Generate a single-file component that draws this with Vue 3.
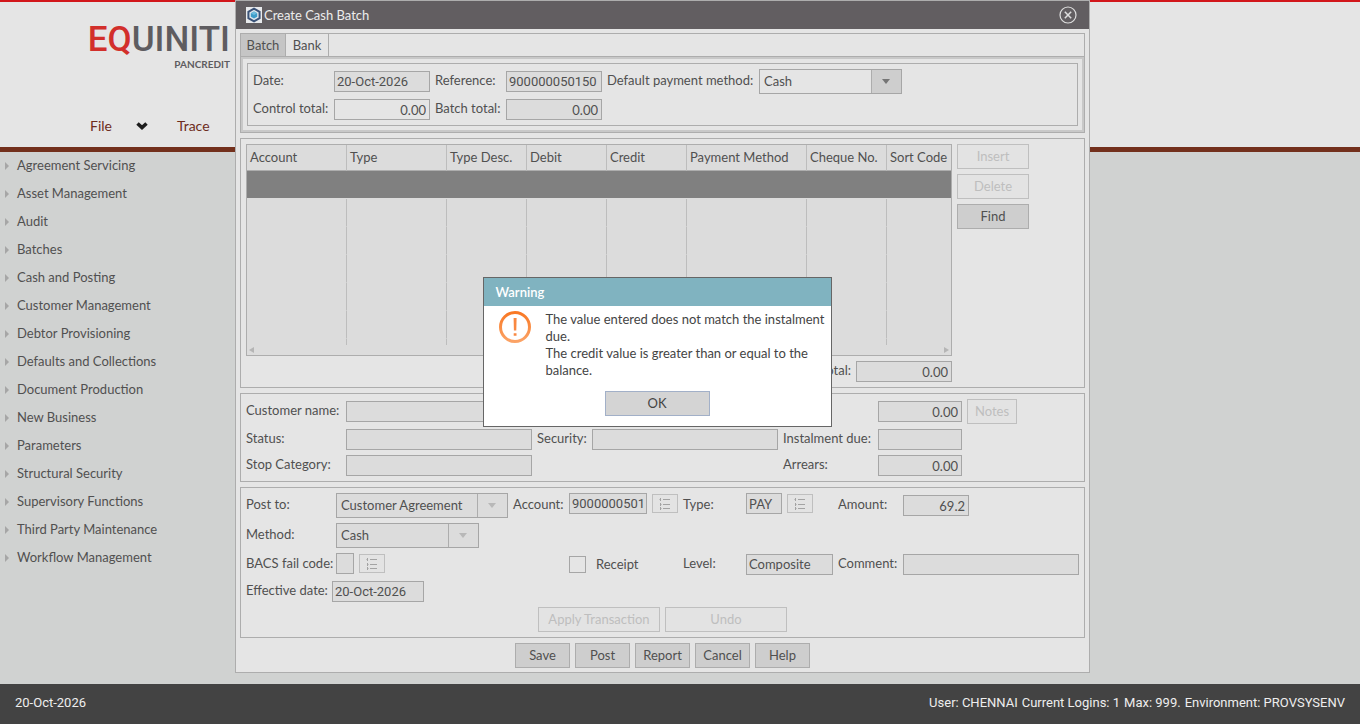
<script setup>
const menuItems = [
  'Agreement Servicing', 'Asset Management', 'Audit', 'Batches', 'Cash and Posting',
  'Customer Management', 'Debtor Provisioning', 'Defaults and Collections',
  'Document Production', 'New Business', 'Parameters', 'Structural Security',
  'Supervisory Functions', 'Third Party Maintenance', 'Workflow Management',
]
const columns = [
  { name: 'Account', size: 'w100' },
  { name: 'Type', size: 'w100' },
  { name: 'Type Desc.', size: 'w80' },
  { name: 'Debit', size: 'w80' },
  { name: 'Credit', size: 'w80' },
  { name: 'Payment Method', size: 'w120' },
  { name: 'Cheque No.', size: 'w80' },
  { name: 'Sort Code', size: 'rest' },
]
const actions = ['Save', 'Post', 'Report', 'Cancel', 'Help']
</script>

<template>
  <div class="page">
    <header class="banner">
      <div class="logo">
        <span class="brand"><span class="brand-red">EQ</span>UINITI</span>
        <span class="brand-sub">PANCREDIT</span>
      </div>
      <nav class="top-nav">
        <a href="#file">File</a>
        <svg class="chevron" viewBox="0 0 12 8" aria-hidden="true"><path d="M1.5 1.5 L6 5.5 L10.5 1.5" fill="none" stroke="#1c1c1c" stroke-width="3.6" /></svg>
        <a href="#trace">Trace</a>
      </nav>
    </header>

    <nav class="side-menu">
      <a v-for="item in menuItems" :key="item" href="#menu"><i class="caret"></i><span>{{ item }}</span></a>
    </nav>

    <footer class="status-bar">
      <span>20-Oct-2026</span>
      <span class="session"><span>User: CHENNAI</span><span>Current Logins: 1</span><span>Max: 999.</span><span>Environment: PROVSYSENV</span></span>
    </footer>

    <main class="window">
      <div class="title-bar">
        <svg class="app-icon" viewBox="0 0 16 16" aria-hidden="true">
          <rect width="16" height="16" fill="#e8eaec" />
          <path d="M8 1.6 L13.6 4.8 V11.2 L8 14.4 L2.4 11.2 V4.8 Z" fill="#dfe6ec" stroke="#3b5378" stroke-width="2" />
          <path d="M8 4.4 L11.2 6.2 V9.8 L8 11.6 L4.8 9.8 V6.2 Z" fill="#3d9cc9" />
          <path d="M8 4.4 L11.2 6.2 L8 8 L4.8 6.2 Z" fill="#6cbbdc" />
        </svg>
        <h1>Create Cash Batch</h1>
        <button class="close" type="button" aria-label="Close">
          <svg viewBox="0 0 18 18"><g fill="none" stroke="#dedede"><circle cx="9" cy="9" r="8" stroke-width="1.2" /><path d="M5.8 5.8 L12.2 12.2 M12.2 5.8 L5.8 12.2" stroke-width="1.5" /></g></svg>
        </button>
      </div>

      <div class="content">
        <section class="tab-box">
          <div class="tabs">
            <button class="tab active" type="button">Batch</button>
            <button class="tab" type="button">Bank</button>
          </div>
          <div class="tab-frame">
            <div class="batch-form">
              <label for="date">Date:</label>
              <input id="date" class="digits" value="20-Oct-2026" readonly>
              <label for="reference">Reference:</label>
              <input id="reference" class="digits" value="900000050150" readonly>
              <label for="default-method">Default payment method:</label>
              <div class="select-box short">
                <select id="default-method"><option>Cash</option></select><i></i>
              </div>
              <label for="control-total">Control total:</label>
              <input id="control-total" class="num open" value="0.00">
              <label for="batch-total">Batch total:</label>
              <input id="batch-total" class="num" value="0.00" readonly>
            </div>
          </div>
        </section>

        <section class="panel entries">
          <div class="entries-main">
            <div class="grid-box">
              <div class="grid-view">
                <table>
                  <thead>
                    <tr><th v-for="c in columns" :key="c.name" :class="c.size">{{ c.name }}</th></tr>
                  </thead>
                  <tbody>
                    <tr v-for="n in 7" :key="n" :class="{ selected: n === 1 }">
                      <td v-for="c in columns" :key="c.name"></td>
                    </tr>
                  </tbody>
                </table>
              </div>
              <div class="scroll-strip"><i class="arrow-left"></i><i class="arrow-right"></i></div>
            </div>
            <div class="total-line">
              <label for="total">Total:</label>
              <input id="total" class="num" value="0.00" readonly>
            </div>
          </div>
          <div class="entries-actions">
            <button class="btn" type="button" disabled>Insert</button>
            <button class="btn" type="button" disabled>Delete</button>
            <button class="btn" type="button">Find</button>
          </div>
        </section>

        <section class="panel customer-form">
          <label for="customer">Customer name:</label>
          <input id="customer" class="wide" readonly>
          <label for="balance">Balance:</label>
          <input id="balance" class="num" value="0.00" readonly>
          <button class="btn" type="button" disabled>Notes</button>

          <label for="status" class="first">Status:</label>
          <input id="status" readonly>
          <label for="security">Security:</label>
          <input id="security" readonly>
          <label for="instalment">Instalment due:</label>
          <input id="instalment" readonly>

          <label for="stop" class="first">Stop Category:</label>
          <input id="stop" readonly>
          <label for="arrears" class="col-five">Arrears:</label>
          <input id="arrears" class="num" value="0.00" readonly>
        </section>

        <section class="panel posting">
          <div class="post-form">
            <label for="post-to" class="first">Post to:</label>
            <div class="select-box">
              <select id="post-to" disabled><option>Customer Agreement</option></select><i></i>
            </div>
            <label for="account">Account:</label>
            <div class="lookup">
              <input id="account" class="digits" value="9000000501" readonly>
              <button type="button" class="list-btn" aria-label="Find account" disabled><svg viewBox="0 0 12 12"><path d="M4 1.5h7M4 6.5h7M4 10.5h7M1.5 0v3M1.5 5v3M1.5 9v3M0.5 1.5h1M1.5 6.5h1M1.5 10.5h1" /></svg></button>
            </div>
            <label for="type">Type:</label>
            <div class="lookup">
              <input id="type" class="code" value="PAY" readonly>
              <button type="button" class="list-btn" aria-label="Find type" disabled><svg viewBox="0 0 12 12"><path d="M4 1.5h7M4 6.5h7M4 10.5h7M1.5 0v3M1.5 5v3M1.5 9v3M0.5 1.5h1M1.5 6.5h1M1.5 10.5h1" /></svg></button>
            </div>
            <label for="amount">Amount:</label>
            <input id="amount" class="num amount" value="69.2" readonly>

            <label for="method" class="first">Method:</label>
            <div class="select-box short">
              <select id="method" disabled><option>Cash</option></select><i></i>
            </div>

            <label for="bacs" class="first">BACS fail code:</label>
            <div class="lookup">
              <input id="bacs" class="tiny" readonly>
              <button type="button" class="list-btn" aria-label="Find fail code" disabled><svg viewBox="0 0 12 12"><path d="M4 1.5h7M4 6.5h7M4 10.5h7M1.5 0v3M1.5 5v3M1.5 9v3M0.5 1.5h1M1.5 6.5h1M1.5 10.5h1" /></svg></button>
            </div>
            <label class="receipt"><input type="checkbox">Receipt</label>
            <label for="level">Level:</label>
            <input id="level" value="Composite" readonly>
            <label for="comment">Comment:</label>
            <input id="comment" readonly>
          </div>
          <div class="date-line">
            <label for="effective">Effective date:</label>
            <input id="effective" class="digits" value="20-Oct-2026" readonly>
          </div>
          <div class="button-row large">
            <button class="btn" type="button" disabled>Apply Transaction</button>
            <button class="btn" type="button" disabled>Undo</button>
          </div>
        </section>

        <div class="button-row">
          <button v-for="a in actions" :key="a" class="btn" type="button">{{ a }}</button>
        </div>
      </div>

      <div class="dialog" role="alertdialog" aria-labelledby="warning-title">
        <h2 id="warning-title">Warning</h2>
        <div class="dialog-body">
          <svg class="alert-icon" viewBox="0 0 32 32" aria-hidden="true">
            <defs><linearGradient id="alert" x1="0" y1="0" x2="0" y2="1"><stop offset="0" stop-color="#f97824" /><stop offset="1" stop-color="#fba366" /></linearGradient></defs>
            <circle cx="16" cy="16" r="14.5" fill="none" stroke="url(#alert)" stroke-width="3" />
            <path d="M14.6 7 h3 l-0.3 12.5 h-2.4 Z M14.7 22.2 h2.8 v2.6 h-2.8 Z" fill="#f98840" />
          </svg>
          <p>The value entered does not match the instalment due.<br>The credit value is greater than or equal to the balance.</p>
        </div>
        <button class="btn ok" type="button">OK</button>
      </div>
    </main>
  </div>
</template>

<style>
body { margin: 0; background: #d0d2d1; }
</style>

<style scoped>
* { box-sizing: border-box; }
.page {
  position: relative;
  display: flex;
  flex-direction: column;
  min-height: 100vh;
  font: 13px/17px Lato, "Open Sans", sans-serif;
  color: #505050;
}
a { color: inherit; text-decoration: none; }
button, input, select { font: inherit; color: inherit; margin: 0; }

.banner {
  height: 152px;
  border-top: 2px solid #d2161b;
  border-bottom: 5px solid #73301c;
  background: #e5e5e5;
}
.logo {
  display: flex;
  flex-direction: column;
  width: 230px;
  padding-top: 19px;
  text-align: right;
  color: #5e5c60;
}
.brand { font: 500 35px/37px Roboto, sans-serif; }
.brand-red { color: #d22f2b; }
.brand-sub { font-size: 10px; line-height: 12px; font-weight: 700; }
.top-nav {
  display: flex;
  align-items: center;
  padding: 47px 0 0 90px;
  font-size: 14px;
  color: #6d2c1c;
}
.chevron { width: 12px; height: 8px; margin: 0 29px 0 24px; }

.side-menu { flex: 1; display: flex; flex-direction: column; }
.side-menu a { display: flex; align-items: center; height: 28px; padding-left: 5px; }
.side-menu span { padding-bottom: 2px; }
.caret {
  margin-right: 8px;
  border: 4px solid transparent;
  border-left-color: #a6a6a6;
  border-right-width: 0;
}

.status-bar {
  display: flex;
  justify-content: space-between;
  align-items: center;
  height: 40px;
  padding: 0 15px 3px;
  background: #434343;
  color: #eee;
  font-family: Roboto, sans-serif;
}
.session { display: flex; gap: 4px; }

.window {
  position: absolute;
  top: 0;
  left: 235px;
  right: 270px;
  border: 1px solid #adadad;
  background: #e5e5e5;
}
.title-bar {
  display: flex;
  align-items: center;
  gap: 2px;
  height: 28px;
  padding: 0 12px 0 10px;
  background: #625e61;
  color: #ececec;
}
.title-bar h1 { flex: 1; margin: 0; font-size: 13px; font-weight: 400; }
.app-icon { width: 16px; height: 16px; }
.close { width: 18px; height: 18px; padding: 0; border: 0; background: none; }
.close svg { display: block; width: 18px; height: 18px; }

.content { display: flex; flex-direction: column; gap: 5px; padding: 4px; }
.tab-box { border: 1px solid #adadad; }
.tabs { display: flex; height: 23px; border-bottom: 1px solid #adadad; }
.tab {
  width: 43px;
  height: 22px;
  padding: 0;
  border: 0;
  border-right: 1px solid #adadad;
  background: none;
}
.tab.active { width: 45px; background: #c5c5c5; }
.tab-frame { padding: 4px; border: 2px solid #c8c8c8; }
.batch-form {
  display: grid;
  grid-template-columns: 76px 96px 66px 96px 147px 1fr;
  gap: 5px;
  align-items: center;
  padding: 5px;
  border: 1px solid #adadad;
}
label { padding-bottom: 2px; white-space: nowrap; }
input {
  width: 100%;
  height: 21px;
  padding: 0 2px;
  border: 1px solid #a6a6a6;
  border-radius: 0;
  background: #dcdcdc;
  outline: none;
}
.num { padding-right: 3px; text-align: right; }
.digits { padding-right: 0; font-family: Roboto, sans-serif; }
.open { background: #e5e5e5; }
.select-box {
  position: relative;
  display: grid;
  grid-template-columns: 1fr;
  height: 25px;
}
.select-box.short { width: 143px; }
.select-box select {
  appearance: none;
  height: 25px;
  padding: 0 32px 0 4px;
  border: 1px solid #a6a6a6;
  border-radius: 0;
  background: #e5e5e5;
  opacity: 1;
}
.select-box i {
  position: absolute;
  top: 1px;
  right: 1px;
  bottom: 1px;
  width: 30px;
  border-left: 1px solid #adadad;
  background: #cecece;
  pointer-events: none;
}
.select-box i::after {
  content: "";
  position: absolute;
  top: 9px;
  left: 10px;
  border: 4px solid transparent;
  border-top: 5px solid #757575;
  border-bottom: 0;
}
.select-box select:disabled, .select-box select:disabled + i { background: #dcdcdc; }
.select-box select:disabled + i::after { border-top-color: #b8b8b8; }

.btn {
  height: 25px;
  padding: 0;
  border: 1px solid #adadad;
  background: #cecece;
}
.btn:disabled { border-color: #bfbfbf; background: #e3e3e3; color: #bebebe; }

.panel { padding: 5px; border: 1px solid #adadad; }
.entries { display: flex; gap: 5px; }
.entries-main { width: 706px; }
.entries-actions { display: flex; flex-direction: column; gap: 5px; width: 72px; }
.grid-box { border: 1px solid #adadad; background: #dcdcdc; }
.grid-view { height: 200px; overflow: hidden; }
table { width: 100%; table-layout: fixed; border-spacing: 0; }
th {
  height: 26px;
  padding: 0 0 0 3px;
  border-right: 1px solid #bdbdbd;
  border-bottom: 1px solid #adadad;
  font-weight: 400;
  text-align: left;
  white-space: nowrap;
}
td {
  height: 28px;
  padding: 0;
  border-right: 1px solid #bdbdbd;
  border-bottom: 1px solid #dcdcdc;
}
th:last-child, td:last-child { border-right: 0; }
.selected td { border-right: 0; background: #808080; background-clip: padding-box; }
.w80 { width: 80px; }
.w100 { width: 100px; }
.w120 { width: 120px; }
.scroll-strip {
  display: flex;
  align-items: center;
  justify-content: space-between;
  height: 10px;
  padding: 0 2px;
}
.arrow-left { border: 3px solid transparent; border-right: 5px solid #b5b5b5; border-left: 0; }
.arrow-right { border: 3px solid transparent; border-left: 5px solid #b5b5b5; border-right: 0; }
.total-line { display: flex; justify-content: flex-end; gap: 5px; margin-top: 5px; line-height: 19px; }
.total-line input { width: 96px; }

.customer-form {
  display: grid;
  grid-template-columns: 95px 186px 50px 186px 90px 84px 50px;
  gap: 5px;
  align-items: center;
}
.wide { grid-column: 2 / 5; }
.first { grid-column: 1; }
.col-five { grid-column: 5; }

.post-form {
  display: grid;
  grid-template-columns: 85px 172px 51px 109px 58px 87px 60px 1fr;
  grid-template-rows: 25px 25px 22px;
  gap: 5px;
  align-items: center;
}
.lookup { display: flex; align-items: center; align-self: start; gap: 5px; }
.lookup input { width: 78px; }
.lookup .code { width: 36px; }
.lookup .tiny { width: 18px; }
.list-btn {
  display: grid;
  place-items: center;
  width: 26px;
  height: 19px;
  padding: 0;
  border: 1px solid #bfbfbf;
  background: #e3e3e3;
}
.list-btn svg { width: 12px; height: 12px; fill: none; stroke: #a3a3a3; }
.amount { width: 66px; }
.receipt { grid-column: 4; display: flex; align-items: center; gap: 10px; padding: 0; }
.receipt input { appearance: none; width: 17px; height: 17px; background: #e5e5e5; }
.date-line { display: flex; gap: 5px; margin: 6px 0 5px; line-height: 19px; }
.date-line label { width: 81px; }
.date-line input { width: 92px; }
.button-row { display: flex; justify-content: center; gap: 5px; }
.button-row .btn { width: 55px; }
.button-row.large .btn { width: 122px; }

.dialog {
  position: absolute;
  top: 276px;
  left: calc(50% - 180px);
  width: 349px;
  padding-bottom: 10px;
  border: 1px solid #666;
  background: #fff;
  color: #444;
}
.dialog h2 {
  height: 28px;
  margin: 0;
  padding-left: 12px;
  background: #80b3c0;
  color: #fff;
  font-size: 13px;
  line-height: 29px;
  font-weight: 600;
}
.dialog-body { display: flex; gap: 15px; padding: 5px 0 12px 15px; }
.dialog-body p { flex: 1; margin: 0; }
.alert-icon { flex: none; width: 32px; height: 32px; }
.ok {
  display: block;
  width: 105px;
  margin: 0 auto;
  border-color: #a2b0c8;
  background: #d4d4d4;
}
</style>
